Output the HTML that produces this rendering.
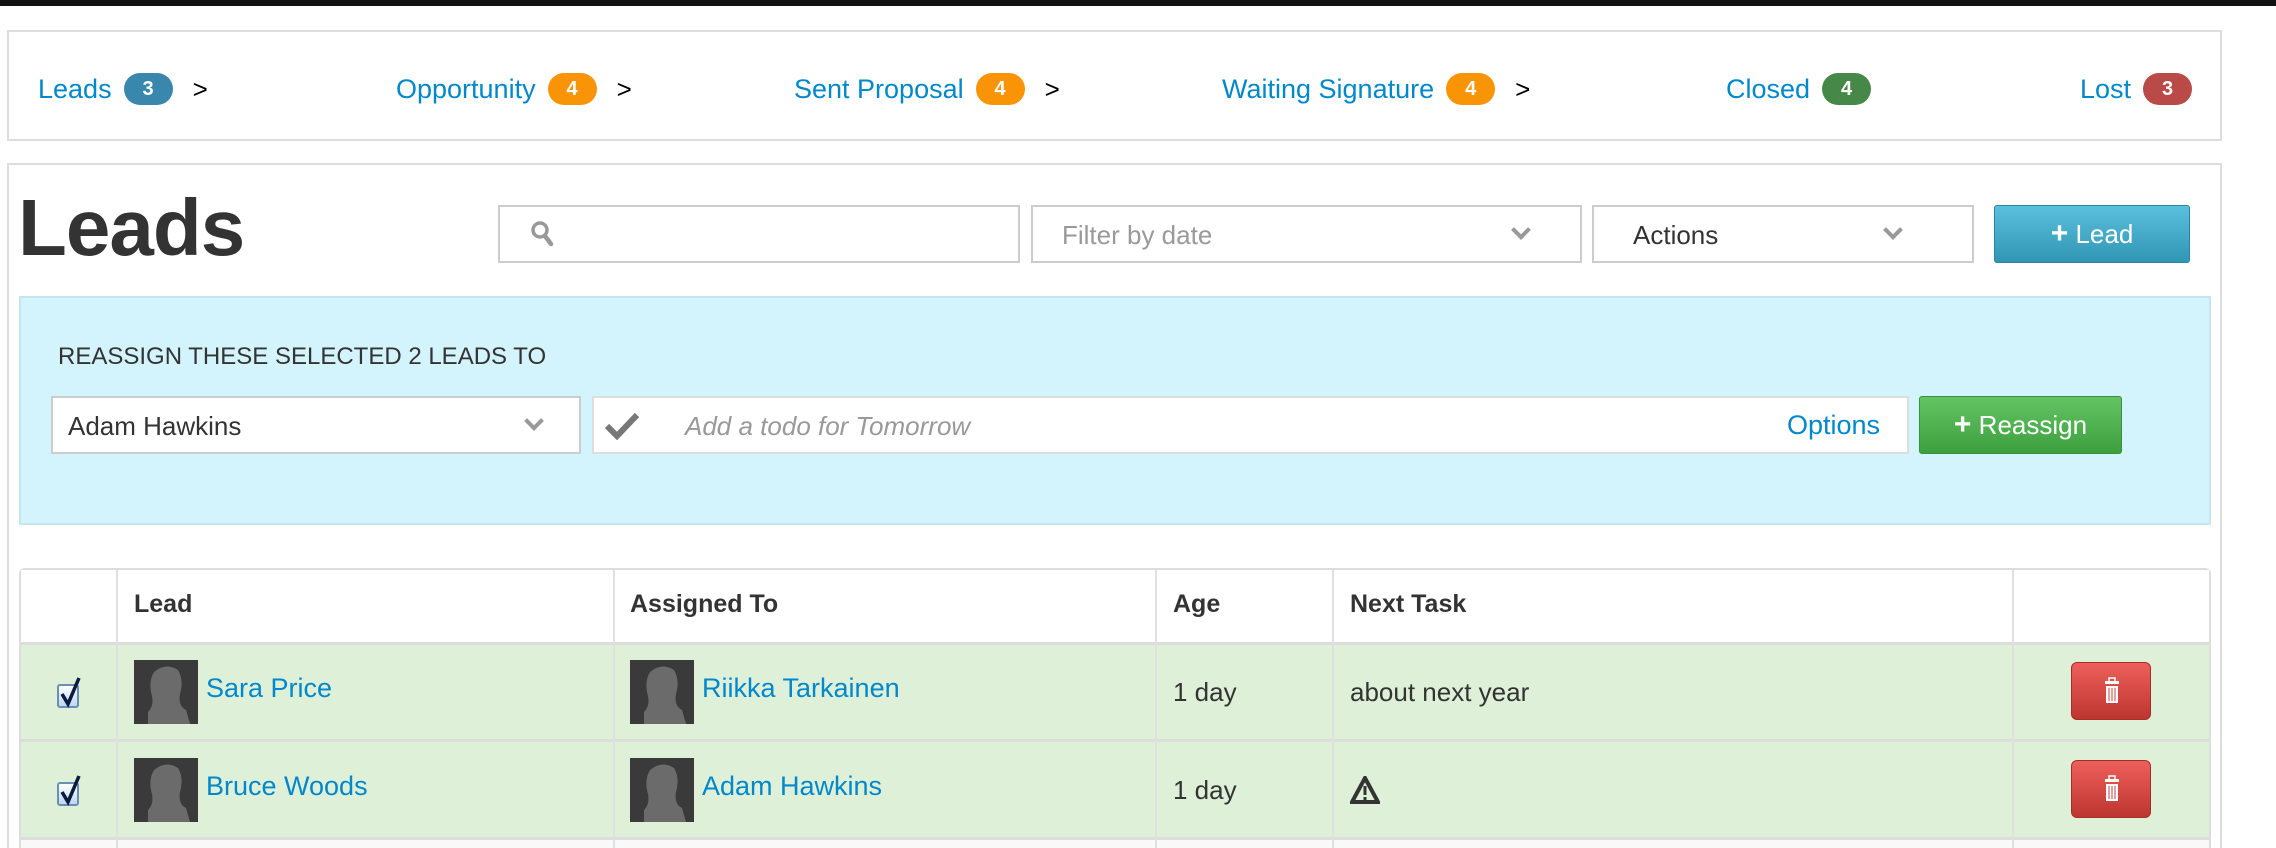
<!DOCTYPE html>
<html><head><meta charset="utf-8"><style>
*{box-sizing:border-box;margin:0;padding:0}
html,body{width:2276px;height:848px;overflow:hidden}
body{background:#fff;font-family:"Liberation Sans",Arial,sans-serif;position:relative;color:#333}
.a{position:absolute}
.topbar{left:0;top:0;width:2276px;height:6px;background:#111}
.box{border:2px solid #ddd;background:#fff}
.it{top:73px;display:flex;align-items:center;height:32px;white-space:nowrap}
.pl{font-size:27px;color:#0088cc;line-height:32px}
.bd{display:inline-block;height:32px;border-radius:16px;color:#fff;font-weight:bold;font-size:20px;text-align:center;line-height:32px;width:49px;margin-left:12px}
.gt{font-size:26px;color:#000;line-height:32px;margin-left:20px}
.inp{border:2px solid #ccc;background:#fff;height:58px}
.chev{width:14px;height:14px;border-right:4px solid #999;border-bottom:4px solid #999;transform:rotate(45deg)}
.th{font-weight:bold;font-size:25px;top:590px;color:#333}
.vl{width:2px;background:#e0e0e0}
.row{left:21px;width:2188px;background:#dff0d8}
.av{width:64px;height:64px;background:#3a3a3a;overflow:hidden}
.lnk{color:#0088cc;font-size:27px}
.trash{width:80px;height:58px;border-radius:6px;background:linear-gradient(#ee5f5b,#bd362f);border:1px solid #a52f28}
</style></head><body>
<div class="a topbar"></div>
<div class="a box" style="left:7px;top:30px;width:2215px;height:111px"></div>
<div class="a it" style="left:38px"><span class="pl">Leads</span><span class="bd" style="background:#3a87ad">3</span><span class="gt">&gt;</span></div>
<div class="a it" style="left:396px"><span class="pl">Opportunity</span><span class="bd" style="background:#f89406">4</span><span class="gt">&gt;</span></div>
<div class="a it" style="left:794px"><span class="pl">Sent Proposal</span><span class="bd" style="background:#f89406">4</span><span class="gt">&gt;</span></div>
<div class="a it" style="left:1222px"><span class="pl">Waiting Signature</span><span class="bd" style="background:#f89406">4</span><span class="gt">&gt;</span></div>
<div class="a it" style="left:1726px"><span class="pl">Closed</span><span class="bd" style="background:#468847">4</span></div>
<div class="a it" style="left:2080px"><span class="pl">Lost</span><span class="bd" style="background:#b94a48">3</span></div>

<div class="a box" style="left:7px;top:163px;width:2215px;height:685px;border-bottom:none"></div>
<div class="a" style="left:18px;top:183px;font-size:80px;font-weight:bold;letter-spacing:-1px;color:#333;line-height:90px">Leads</div>
<div class="a inp" style="left:498px;top:205px;width:522px"></div>
<svg class="a" style="left:530px;top:220px" width="26" height="28" viewBox="0 0 26 28"><circle cx="10" cy="10" r="7" fill="none" stroke="#999" stroke-width="3.5"/><path d="M15 16 L21 24" stroke="#999" stroke-width="4.5" stroke-linecap="round"/></svg>
<div class="a inp" style="left:1031px;top:205px;width:551px"></div>
<div class="a" style="left:1062px;top:220px;font-size:26px;color:#999">Filter by date</div>
<div class="a chev" style="left:1514px;top:223px"></div>
<div class="a inp" style="left:1592px;top:205px;width:382px"></div>
<div class="a" style="left:1633px;top:220px;font-size:26px;color:#333">Actions</div>
<div class="a chev" style="left:1886px;top:223px"></div>
<div class="a" style="left:1994px;top:205px;width:196px;height:58px;background:linear-gradient(#5bc0de,#2f96b4);border:1px solid #2a85a0;border-radius:3px;color:#fff;font-size:26px;line-height:56px;text-align:center"><b style="font-size:30px">+</b> Lead</div>

<div class="a" style="left:19px;top:296px;width:2192px;height:229px;background:#d3f4fc;border:2px solid #c5e6ee"></div>
<div class="a" style="left:58px;top:343px;font-size:24px;color:#333">REASSIGN THESE SELECTED 2 LEADS TO</div>
<div class="a inp" style="left:51px;top:396px;width:530px"></div>
<div class="a" style="left:68px;top:411px;font-size:26px;color:#333">Adam Hawkins</div>
<div class="a chev" style="left:527px;top:414px"></div>
<div class="a" style="left:592px;top:396px;width:1317px;height:58px;background:#fff;border:2px solid #ddd"></div>
<svg class="a" style="left:604px;top:412px" width="36" height="28" viewBox="0 0 36 28"><path d="M3 14 L13 24 L33 3" fill="none" stroke="#777" stroke-width="6"/></svg>
<div class="a" style="left:685px;top:411px;font-size:26px;color:#999;font-style:italic">Add a todo for Tomorrow</div>
<div class="a" style="left:1787px;top:410px;font-size:27px;color:#0088cc">Options</div>
<div class="a" style="left:1919px;top:396px;width:203px;height:58px;background:linear-gradient(#62c462,#3e9f3e);border:1px solid #3a8f3a;border-radius:3px;color:#fff;font-size:26px;line-height:56px;text-align:center"><b style="font-size:30px">+</b> Reassign</div>

<div class="a" style="left:19px;top:568px;width:2192px;height:280px;border:2px solid #ddd;border-bottom:none;border-radius:6px 6px 0 0;background:#f9f9f9"></div>
<div class="a" style="left:21px;top:570px;width:2188px;height:73px;background:#fff"></div>
<div class="a row" style="top:645px;height:94px"></div>
<div class="a row" style="top:742px;height:95px"></div>
<div class="a" style="left:21px;top:642px;width:2188px;height:3px;background:#ddd"></div>
<div class="a" style="left:21px;top:739px;width:2188px;height:3px;background:#ddd"></div>
<div class="a" style="left:21px;top:837px;width:2188px;height:3px;background:#ddd"></div>
<div class="a vl" style="left:116px;top:570px;height:278px"></div>
<div class="a vl" style="left:613px;top:570px;height:278px"></div>
<div class="a vl" style="left:1155px;top:570px;height:278px"></div>
<div class="a vl" style="left:1332px;top:570px;height:278px"></div>
<div class="a vl" style="left:2012px;top:570px;height:278px"></div>
<div class="a th" style="left:134px">Lead</div>
<div class="a th" style="left:630px">Assigned To</div>
<div class="a th" style="left:1173px">Age</div>
<div class="a th" style="left:1350px">Next Task</div>

<div class="a" style="left:57px;top:684px;width:22px;height:24px;border:2px solid #6a8fb0;border-radius:3px;background:linear-gradient(#fff,#bcd8f0)"></div>
<svg class="a" style="left:57px;top:676px" width="26" height="32"><path d="M5 18 L11 28 L22 2" fill="none" stroke="#0a1a40" stroke-width="3.5"/></svg>
<div class="a av" style="left:134px;top:660px"><svg width="64" height="64"><path d="M14 64 L14 52 Q20 46 18 36 Q14 22 20 12 Q32 2 44 10 Q50 20 46 34 Q44 46 52 50 L56 64 Z" fill="#6b6b6b"/></svg></div>
<div class="a lnk" style="left:206px;top:673px">Sara Price</div>
<div class="a av" style="left:630px;top:660px"><svg width="64" height="64"><path d="M14 64 L14 52 Q20 46 18 36 Q14 22 20 12 Q32 2 44 10 Q50 20 46 34 Q44 46 52 50 L56 64 Z" fill="#6b6b6b"/></svg></div>
<div class="a lnk" style="left:702px;top:673px">Riikka Tarkainen</div>
<div class="a" style="left:1173px;top:677px;font-size:26px">1 day</div>
<div class="a" style="left:1350px;top:677px;font-size:26px">about next year</div>
<div class="a trash" style="left:2071px;top:662px"><svg width="80" height="58"><rect x="33" y="18" width="14" height="3" fill="#fff"/><rect x="37" y="15" width="6" height="4" fill="none" stroke="#fff" stroke-width="1.5"/><rect x="34" y="23" width="12" height="17" fill="#fff"/><path d="M37 25v13M40 25v13M43 25v13" stroke="#c9413b" stroke-width="1"/></svg></div>

<div class="a" style="left:57px;top:782px;width:22px;height:24px;border:2px solid #6a8fb0;border-radius:3px;background:linear-gradient(#fff,#bcd8f0)"></div>
<svg class="a" style="left:57px;top:774px" width="26" height="32"><path d="M5 18 L11 28 L22 2" fill="none" stroke="#0a1a40" stroke-width="3.5"/></svg>
<div class="a av" style="left:134px;top:758px"><svg width="64" height="64"><path d="M14 64 L14 52 Q20 46 18 36 Q14 22 20 12 Q32 2 44 10 Q50 20 46 34 Q44 46 52 50 L56 64 Z" fill="#6b6b6b"/></svg></div>
<div class="a lnk" style="left:206px;top:771px">Bruce Woods</div>
<div class="a av" style="left:630px;top:758px"><svg width="64" height="64"><path d="M14 64 L14 52 Q20 46 18 36 Q14 22 20 12 Q32 2 44 10 Q50 20 46 34 Q44 46 52 50 L56 64 Z" fill="#6b6b6b"/></svg></div>
<div class="a lnk" style="left:702px;top:771px">Adam Hawkins</div>
<div class="a" style="left:1173px;top:775px;font-size:26px">1 day</div>
<svg class="a" style="left:1350px;top:776px" width="30" height="28"><path d="M15 2 L28 26 L2 26 Z" fill="none" stroke="#333" stroke-width="4"/><path d="M15 10 V19 M15 21 V24" stroke="#333" stroke-width="3"/></svg>
<div class="a trash" style="left:2071px;top:760px"><svg width="80" height="58"><rect x="33" y="18" width="14" height="3" fill="#fff"/><rect x="37" y="15" width="6" height="4" fill="none" stroke="#fff" stroke-width="1.5"/><rect x="34" y="23" width="12" height="17" fill="#fff"/><path d="M37 25v13M40 25v13M43 25v13" stroke="#c9413b" stroke-width="1"/></svg></div>
</body></html>
